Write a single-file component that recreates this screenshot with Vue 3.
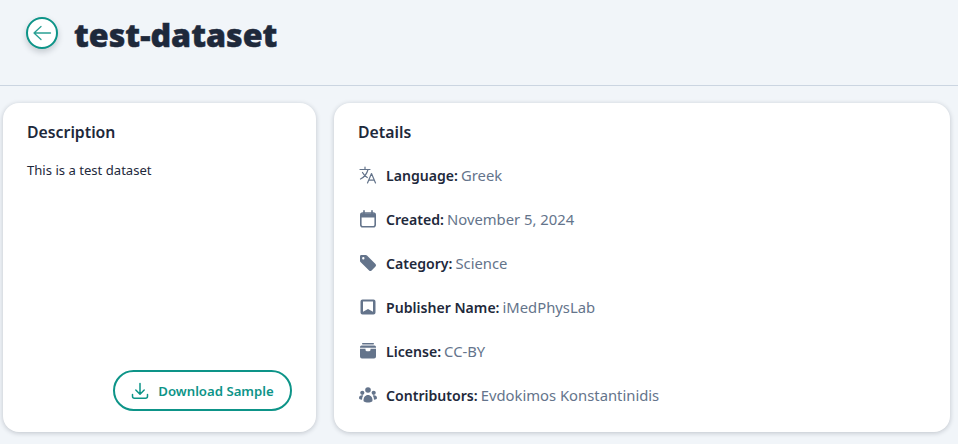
<script setup>
const rows = [
  { key: 'lang', label: 'Language:', value: 'Greek' },
  { key: 'cal', label: 'Created:', value: 'November 5, 2024' },
  { key: 'tag', label: 'Category:', value: 'Science' },
  { key: 'book', label: 'Publisher Name:', value: 'iMedPhysLab' },
  { key: 'box', label: 'License:', value: 'CC-BY' },
  { key: 'users', label: 'Contributors:', value: 'Evdokimos Konstantinidis' },
]
</script>

<template>
  <div class="page">
    <header class="head">
      <button class="back" aria-label="Back">
        <svg width="22" height="22" viewBox="0 0 22 22" fill="none" stroke="#2aa094" stroke-width="1.3" stroke-linecap="round" stroke-linejoin="round">
          <path d="M19.5 11H3M10 4.5L3 11l7 6.5" />
        </svg>
      </button>
      <h1 class="title">test-dataset</h1>
    </header>
    <main class="cards">
      <section class="card left">
        <h2 class="card-title">Description</h2>
        <p class="desc">This is a test dataset</p>
        <div class="actions">
          <button class="download">
            <svg width="18" height="18" viewBox="0 0 18 18" fill="none" stroke="#0d9488" stroke-width="1.5" stroke-linecap="round" stroke-linejoin="round">
              <path d="M9 1.5V12M4.8 8L9 12.2 13.2 8M1.5 12.5v1.8a2 2 0 0 0 2 2h11a2 2 0 0 0 2-2v-1.8" />
            </svg>
            <span>Download Sample</span>
          </button>
        </div>
      </section>
      <section class="card right">
        <h2 class="card-title">Details</h2>
        <ul class="list">
          <li v-for="r in rows" :key="r.key" class="row">
            <span class="ic">
              <svg v-if="r.key === 'lang'" width="18" height="18" viewBox="0 0 18 18" fill="none" stroke="#64748b" stroke-width="1.2" stroke-linecap="round" stroke-linejoin="round">
                <path d="M1 3.500h10M6 1v2.500M9 3.500C8 7.500 5.500 11 1.500 13M3.500 6.500c1 2 2.500 3.600 4.800 5M8.500 17l4-9.500 4 9.500M9.800 14.200h5.400" />
              </svg>
              <svg v-else-if="r.key === 'cal'" width="18" height="18" viewBox="0 0 18 18" fill="none" stroke="#64748b" stroke-width="1.6">
                <rect x="1.800" y="3" width="14.400" height="13.800" rx="2" />
                <path d="M1.800 5.500h14.400" stroke-width="4" />
                <path d="M5 .8v3M13 .8v3" stroke-linecap="round" />
              </svg>
              <svg v-else-if="r.key === 'tag'" width="18" height="18" viewBox="0 0 18 18" fill="#64748b">
                <path d="M1 2.300A1.300 1.300 0 0 1 2.300 1h4.400c.5 0 1 .2 1.300.5l8.500 8.500a1.800 1.800 0 0 1 0 2.500l-3.900 3.900a1.800 1.800 0 0 1-2.500 0L1.500 8C1.200 7.700 1 7.200 1 6.700zM4.300 5.400a1.200 1.200 0 1 0 0-2.400 1.200 1.200 0 0 0 0 2.400z" fill-rule="evenodd" />
              </svg>
              <svg v-else-if="r.key === 'book'" width="18" height="18" viewBox="0 0 18 18" fill="#64748b">
                <path d="M3.500 1.500h11a2 2 0 0 1 2 2v11a2 2 0 0 1-2 2h-11a2 2 0 0 1-2-2v-11a2 2 0 0 1 2-2zM4 3.500v10.200L9 11l5 2.700V3.500z" fill-rule="evenodd" />
              </svg>
              <svg v-else-if="r.key === 'box'" width="18" height="18" viewBox="0 0 18 18" fill="#64748b">
                <rect x="3" y="1" width="12" height="1.400" rx=".7" />
                <path d="M2.500 3.500h13a1.500 1.500 0 0 1 1.500 1.500v.7H1V5a1.500 1.500 0 0 1 1.500-1.500z" />
                <path d="M1 6.800h5.500v1c0 1 .8 1.500 2.500 1.500s2.500-.5 2.500-1.500v-1H17v7.700a2 2 0 0 1-2 2H3a2 2 0 0 1-2-2z" />
              </svg>
              <svg v-else width="18" height="18" viewBox="0 0 18 18" fill="#64748b">
                <circle cx="9" cy="4" r="2.800" />
                <circle cx="3.300" cy="6.800" r="2.100" />
                <circle cx="14.700" cy="6.800" r="2.100" />
                <path d="M4.500 14.500c0-3.200 1.800-5.500 4.500-5.500s4.500 2.300 4.500 5.500c0 .8-.8 2-4.500 2s-4.500-1.200-4.500-2z" />
                <path d="M0 12c0-1.800 1.300-2.700 3-2.700.5 0 .9.100 1.200.2C3.400 10.700 3 12.100 3 13.700 1.200 13.700 0 13.100 0 12zM18 12c0-1.800-1.300-2.700-3-2.700-.5 0-.9.100-1.200.2.800 1.200 1.200 2.600 1.200 4.200 1.800 0 3-.6 3-1.700z" />
              </svg>
            </span>
            <strong class="label">{{ r.label }}</strong>
            <span class="value">{{ r.value }}</span>
          </li>
        </ul>
      </section>
    </main>
  </div>
</template>

<style>
html, body { margin: 0; background: #f1f5f9; overflow: hidden; }
</style>

<style scoped>
.page {
  width: 958px;
  height: 444px;
  background: #f1f5f9;
  font-family: "Noto Sans", "Open Sans", sans-serif;
  color: #1e293b;
}
.head {
  height: 86px;
  box-sizing: border-box;
  border-bottom: 1px solid #cbd5e1;
  display: flex;
  align-items: flex-start;
  padding: 17px 0 0 26px;
  gap: 16px;
}
.back {
  width: 32px;
  height: 32px;
  padding: 0;
  border: 2px solid #0d9488;
  border-radius: 50%;
  background: #fff;
  box-shadow: 0 3px 6px rgba(15, 23, 42, 0.2);
  display: flex;
  align-items: center;
  justify-content: center;
  box-sizing: border-box;
}
.title {
  margin: -2px 0 0;
  font-size: 32.200px;
  line-height: 40px;
  font-weight: 900;
  color: #1e293b;
  -webkit-text-stroke: 0.5px #1e293b;
}
.cards {
  display: flex;
  gap: 18px;
  padding: 17px 8px 0 3px;
}
.card {
  height: 329px;
  box-sizing: border-box;
  background: #fff;
  border-radius: 16px;
  box-shadow: 0 1px 5px rgba(15, 23, 42, 0.22);
  display: flex;
  flex-direction: column;
}
.left {
  width: 313px;
  padding: 18px 24px 21px 24px;
}
.right {
  flex: 1;
  padding: 18px 24px;
}
.card-title {
  margin: 0;
  font-size: 15.800px;
  line-height: 22px;
  font-weight: 600;
  color: #1e293b;
}
.desc {
  margin: 18px 0 0;
  font-size: 13.100px;
  line-height: 18px;
  color: #1e293b;
}
.actions {
  margin-top: auto;
  display: flex;
  justify-content: flex-end;
}
.download {
  width: 179px;
  height: 41px;
  box-sizing: border-box;
  border: 2px solid #0d9488;
  border-radius: 21px;
  background: #fff;
  color: #0d9488;
  font: 600 13.200px "Noto Sans", sans-serif;
  display: flex;
  align-items: center;
  justify-content: center;
  gap: 9px;
  padding: 0;
}
.list {
  list-style: none;
  margin: 21px 0 0;
  padding: 0;
  display: flex;
  flex-direction: column;
  gap: 22px;
}
.row {
  height: 22px;
  display: flex;
  align-items: center;
  font-size: 14.100px;
  white-space: pre;
}
.ic {
  width: 18px;
  height: 18px;
  margin-left: 1px;
  margin-right: 9px;
  display: flex;
}
.label {
  font-weight: 600;
  color: #1e293b;
  margin-right: 3px;
}
.value {
  font-size: 14.800px;
  color: #64748b;
}
</style>
